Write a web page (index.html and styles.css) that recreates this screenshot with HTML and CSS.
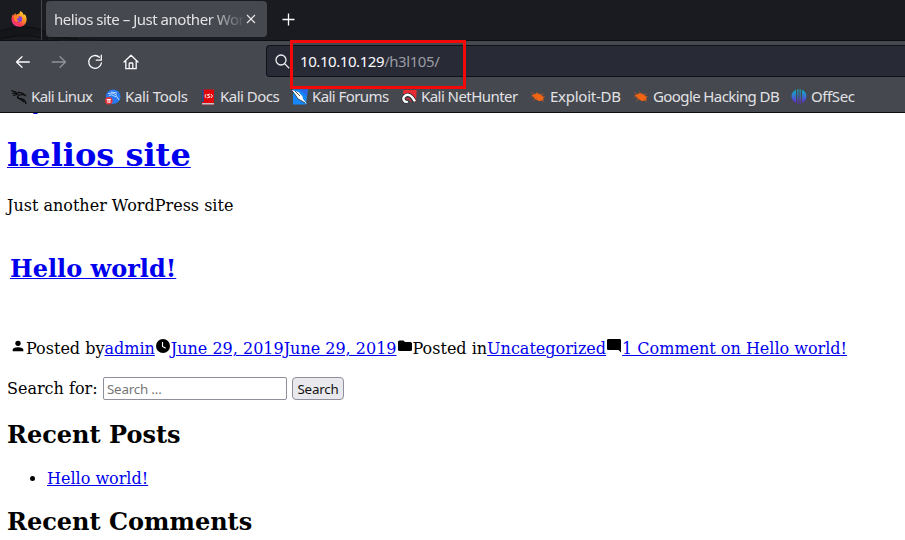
FILE: index.html
```html
<!DOCTYPE html>
<html lang="en">
<head>
<meta charset="utf-8">
<title>helios site – Just another WordPress site</title>
<link rel="stylesheet" href="styles.css">
</head>
<body>
<div class="window">
<header class="tabs">
  <svg class="dragon-bg" width="140" height="41" viewBox="0 0 140 41"><path d="M0 31Q24 23 44 31T78 39L115 41H60L38 34Q18 35 0 39Z" fill="#15161a"/><path d="M0 31Q24 23 44 31T78 39M0 39Q25 32 48 39" fill="none" stroke="#101115" stroke-width="1.5"/></svg>
  <div class="pinned"><svg width="18" height="18" viewBox="0 0 18 18"><defs><linearGradient id="fox" x1="1" y1="0" x2="0.2" y2="1"><stop offset="0" stop-color="#fff44f"/><stop offset=".4" stop-color="#ff9a1f"/><stop offset=".75" stop-color="#ff3750"/><stop offset="1" stop-color="#ea3aa0"/></linearGradient></defs><path d="M10.5 1C12 2 13 3 13.5 4.5Q14.5 5 15 4.2C17.3 8 17 12 14.5 14.7C11 18 5.5 17 3 13.8C.8 10.8 1.2 7 3 4L3.6 5.5L5.3 3.1L6 5Q8.3 3.5 9.4 3.8Q9.4 2 10.5 1Z" fill="url(#fox)"/><path d="M7 6.8Q9 5.5 11.4 6.8C13 9 12 11.9 9.3 12.2C7 12.3 5.6 10.8 6 8.8L8.8 8.2L9 7Z" fill="#8041d9"/><path d="M4 6Q6.5 5 8.8 7.1Q8 8.3 6.5 8.6Q6.7 10.5 9 11Q6.5 12.5 4.5 10.5Z" fill="#ff831f"/></svg></div>
  <div class="tab"><span class="tab-title">helios site – Just another WordPress</span><svg class="close" width="10" height="10" viewBox="0 0 10 10"><path d="M1 1L9 9M9 1L1 9"/></svg></div>
  <svg class="plus" width="13" height="13" viewBox="0 0 13 13"><path d="M6.5 .5V12.5M.5 6.5H12.5"/></svg>
</header>
<nav class="toolbar">
  <svg class="nav-icon back" width="16" height="16" viewBox="0 0 16 16"><path d="M14.3 8H1.5M7 2.8L1.5 8L7 13.2"/></svg>
  <svg class="nav-icon forward" width="16" height="16" viewBox="0 0 16 16"><path d="M1.2 8H14.5M9 2.8L14.5 8L9 13.2"/></svg>
  <svg class="nav-icon reload" width="16" height="16" viewBox="0 0 16 16"><path d="M12.4 3.2A6.4 6.4 0 1 0 14.4 9M14.3 1.2V6.2H9.3"/></svg>
  <svg class="nav-icon home" width="16" height="16" viewBox="0 0 16 16"><path d="M1 8L8 1.2L15 8M2.8 7V14.7H13.2V7M6.2 14.5V9.8Q6.2 9 7 9H9Q9.8 9 9.8 9.8V14.5"/></svg>
  <div class="url"><svg class="lens" width="15" height="15" viewBox="0 0 15 15"><circle cx="6" cy="6" r="5"/><path d="M9.6 9.6L14.2 14.2"/></svg><span class="address">10.10.10.129<span class="path">/h3l105/</span></span></div>
  <div class="highlight"></div>
</nav>
<div class="bookmarks">
  <div class="mark linux"><svg width="16" height="16" viewBox="0 0 16 16"><path d="M.3 1.5L4.5 3L7.5 5.5M1 4L5.5 4.5M2 6.5L6 5.5M7 3.2L12 4.5L15 7M12.5 6Q7 5 6.5 8Q7 9.8 10.5 9.8Q14.7 10.8 14.9 15M8 9.5Q11 11 13 13" stroke="#08080a" stroke-width="1.25" fill="none"/></svg><span>Kali Linux</span></div>
  <div class="mark tools"><svg width="16" height="16" viewBox="0 0 16 16"><circle cx="8.2" cy="7.7" r="7.3" fill="#2878ef"/><path d="M3 4.5L8 4L12 6.5M4 6.5Q7 4.8 9 7Q13 7 14 11M6 3L12 4" fill="none" stroke="#b9d9ff" stroke-width="1"/><circle cx="3.8" cy="11.8" r="3.8" fill="#e3343b"/><path d="M1.8 10.5H5.8M3 10.5V14M4.8 10.5V14" stroke="#fff" fill="none"/></svg><span>Kali Tools</span></div>
  <div class="mark docs"><svg width="16" height="16" viewBox="0 0 16 16"><path d="M2 .5H14V15.5H2Z" fill="#df050b"/><path d="M2 .5H3.7V13H2Z" fill="#214e91"/><path d="M2 14H14V15.5H2Z" fill="#c6c2c4"/><path d="M6.3 5L4.8 7L6.3 9M11 5L12.5 7L11 9M10 5L7.3 6L10.2 7.8L7.3 9" fill="none" stroke="#fff" stroke-width=".9"/></svg><span>Kali Docs</span></div>
  <div class="mark forums"><svg width="16" height="16" viewBox="0 0 16 16"><path d="M1 .5H15.8L14 15.5H1Z" fill="#1688fb"/><path d="M7 .5H15.8L15 7Z" fill="#2767e8"/><path d="M0 1L6.5 3L10.5 7.5L11 10L15 15L9 11.5L6 10L3 5.5Z" fill="#fff"/><path d="M0 2L3 5.5L6 10L9 11.5L13 14M3 2L8 7" fill="none" stroke="#272c34" stroke-width=".8"/></svg><span>Kali Forums</span></div>
  <div class="mark hunter"><svg width="16" height="16" viewBox="0 0 16 16"><path d="M2.5 1H15.7L15 13L11 9L2 5Z" fill="#e72b32"/><path d="M6.8 13.2L4 12.6Q.8 9.5 3.8 7Q7.5 4.2 11 8L14 12.3" fill="none" stroke="#20242b" stroke-width="3.8"/><path d="M6.8 13.2L4 12.6Q.8 9.5 3.8 7Q7.5 4.2 11 8L14 12.3" fill="none" stroke="#fff" stroke-width="2.4"/><path d="M5.2 10.4Q7.6 7.8 10 12.5" fill="none" stroke="#d92a32" stroke-width="1.3"/></svg><span>Kali NetHunter</span></div>
  <div class="mark exploit"><svg width="16" height="16" viewBox="0 0 16 16"><path d="M1.5 6L4.5 5.2L7 4.1L10.5 5.2L13.5 8L13.3 11.5L9 12L5 10L3 7.5Z" fill="#f26512"/><path d="M1 3.5L5 5.5M1 8L5 8M3 12L7 9M6 2.7L9 5.5M11 4.5L14 5.5M12 7.5L15 7.5M11 10L14 13" fill="none" stroke="#b65427" stroke-width=".7"/></svg><span>Exploit-DB</span></div>
  <div class="mark google"><svg width="16" height="16" viewBox="0 0 16 16"><path d="M1.5 6L4.5 5.2L7 4.1L10.5 5.2L13.5 8L13.3 11.5L9 12L5 10L3 7.5Z" fill="#f26512"/><path d="M1 3.5L5 5.5M1 8L5 8M3 12L7 9M6 2.7L9 5.5M11 4.5L14 5.5M12 7.5L15 7.5M11 10L14 13" fill="none" stroke="#b65427" stroke-width=".7"/></svg><span>Google Hacking DB</span></div>
  <div class="mark offsec"><svg width="16" height="16" viewBox="0 0 16 16"><defs><linearGradient id="off" x1="0" y1="0" x2="0" y2="1"><stop stop-color="#08b6c4"/><stop offset=".55" stop-color="#3f67ce"/><stop offset="1" stop-color="#6920c4"/></linearGradient></defs><path d="M5 .8V14Q.5 12 .5 7.3Q.5 3 5 .8ZM11 .8V14Q15.5 12 15.5 7.3Q15.5 3 11 .8ZM6.3 .3H7.4V15L6.3 14.5ZM8.6 .3H9.7V14.5L8.6 15Z" fill="url(#off)"/></svg><span>OffSec</span></div>
</div>
<main class="page">
  <div class="skip"><a href="#content">Skip to content</a></div>
  <h1><a href="#">helios site</a></h1>
  <p class="tagline">Just another WordPress site</p>
  <h2 class="post-title"><a href="#">Hello world!</a></h2>
  <div class="meta"><svg class="person" width="16" height="16" viewBox="0 0 24 24"><circle cx="12" cy="8" r="4"/><path d="M4 20V17.8C4 15 9.3 14 12 14S20 15 20 17.8V20Z"/></svg><span>Posted by</span><a href="#">admin</a><svg class="clock" width="16" height="16" viewBox="0 0 16 16"><circle cx="8" cy="8" r="7"/><path d="M7.5 4V8.5L10.7 10.3" fill="none" stroke="#fff" stroke-width="1.1"/></svg><a href="#">June 29, 2019June 29, 2019</a><svg class="folder" width="16" height="16" viewBox="0 0 16 16"><path d="M2.5 2.5H6.5L8 4H13.5Q15 4 15 5.5V11.5Q15 13 13.5 13H2.5Q1 13 1 11.5V4Q1 2.5 2.5 2.5Z"/></svg><span>Posted in</span><a href="#">Uncategorized</a><svg class="comment" width="16" height="16" viewBox="0 0 16 16"><path d="M2.3 1H13.7Q15 1 15 2.3V14.5L12.5 12H2.3Q1 12 1 10.7V2.3Q1 1 2.3 1Z"/></svg><a href="#">1 Comment on Hello world!</a></div>
  <form class="search"><label for="s">Search for:</label><input id="s" placeholder="Search …"><button type="button">Search</button></form>
  <h2 class="posts">Recent Posts</h2>
  <ul><li><a href="#">Hello world!</a></li></ul>
  <h2 class="comments">Recent Comments</h2>
</main>
</div>
</body>
</html>
```
FILE: styles.css
```css
* { box-sizing: border-box; }
body { margin: 0; background: #fff; color: #000; font: 16px/18px "DejaVu Serif", serif; }
.window { width: 905px; height: 540px; overflow: hidden; }
svg { display: block; flex: none; }
.tabs, .toolbar, .bookmarks { font-family: "Noto Sans", sans-serif; color: #e2e2e5; }
.tabs { position: relative; display: flex; height: 41px; background: #1a1b20; border-bottom: 1px solid #0d0e11; }
.dragon-bg { position: absolute; left: 0; top: 0; }
.pinned { position: relative; width: 42px; height: 40px; padding: 10px 0 0 10px; border-right: 1px solid #45474d; }
.tab { position: relative; display: flex; align-items: center; width: 221px; height: 36px; margin: 1px 0 0 4px; padding: 0 11px 0 8px; border-radius: 4px; background: #45484f; }
.tab-title { width: 190px; overflow: hidden; white-space: nowrap; font-size: 15px; line-height: 22px; letter-spacing: -.48px; -webkit-mask-image: linear-gradient(90deg, #000 155px, transparent 192px); mask-image: linear-gradient(90deg, #000 155px, transparent 192px); }
.close { margin-left: 2px; fill: none; stroke: #e8e8eb; stroke-width: 1.1; }
.plus { margin: 13px 0 0 15px; fill: none; stroke: #fbfbfe; stroke-width: 1.3; }
.toolbar { position: relative; display: flex; align-items: center; height: 41px; padding-left: 15px; background: #45484f; }
.nav-icon { fill: none; stroke: #fbfbfe; stroke-width: 1.3; stroke-linecap: round; stroke-linejoin: round; }
.forward { margin-left: 20px; opacity: .42; }
.reload { margin-left: 20px; }
.home { margin-left: 20px; }
.url { display: flex; align-items: center; flex: 1; height: 32px; margin: -1px 0 0 127px; padding-left: 8px; border: 1px solid #111219; border-right: 0; border-radius: 4px 0 0 4px; background: #282a36; }
.lens { fill: none; stroke: #f0f0f3; stroke-width: 1.3; }
.address { margin-left: 10px; font-size: 15px; line-height: 22px; letter-spacing: -.43px; white-space: nowrap; color: #fbfbfe; }
.path { color: #9b9ca3; }
.highlight { position: absolute; left: 290px; top: -1px; width: 176px; height: 49px; border: 3px solid #f40808; z-index: 2; }
.bookmarks { display: flex; height: 31px; padding-left: 11px; background: #45484f; border-bottom: 1px solid #0d0e11; font-size: 15px; line-height: 22px; }
.mark { display: flex; align-items: center; gap: 4px; height: 30px; white-space: nowrap; flex: none; }
.mark span { padding-bottom: 2px; }
.linux { width: 94px; letter-spacing: -.62px; }
.tools { width: 95px; letter-spacing: -.32px; }
.docs { width: 92px; letter-spacing: -.52px; }
.forums { width: 109px; letter-spacing: -.57px; }
.hunter { width: 129px; letter-spacing: -.55px; }
.exploit { width: 103px; letter-spacing: -.25px; }
.google { width: 158px; letter-spacing: -.6px; }
.offsec { letter-spacing: -.4px; }
.page { height: 427px; padding-left: 7px; overflow: hidden; }
.page a { color: #0000ee; text-decoration: underline; text-decoration-thickness: 1px; }
.skip { height: 1px; margin-bottom: 22px; overflow: hidden; display: flex; align-items: flex-end; }
h1, h2, p, ul { margin: 0; }
h1 { font-size: 32px; line-height: 38px; }
h2 { font-size: 24px; line-height: 28px; }
.tagline { margin-top: 23px; }
.post-title { margin: 40px 0 0 3px; }
.meta { display: flex; height: 18px; margin: 57px 0 0 3px; white-space: nowrap; }
.meta svg { margin-top: -2px; }
.search { display: flex; height: 23px; margin-top: 19px; }
.search label { width: 96px; line-height: 23px; }
.search input, .search button { height: 23px; font: 13.33px "Noto Sans", sans-serif; letter-spacing: -.2px; border: 1px solid #8f8f9d; }
.search input { width: 184px; padding: 0 3px; border-radius: 2px; background: #fff; }
.search input::placeholder { color: #757575; opacity: 1; }
.search button { width: 52px; margin-left: 5px; padding: 0; border-radius: 4px; background: #e9e9ed; color: #111; }
.posts { margin-top: 21px; }
ul { margin-top: 21px; padding-left: 40px; }
.comments { margin-top: 20px; }
```
